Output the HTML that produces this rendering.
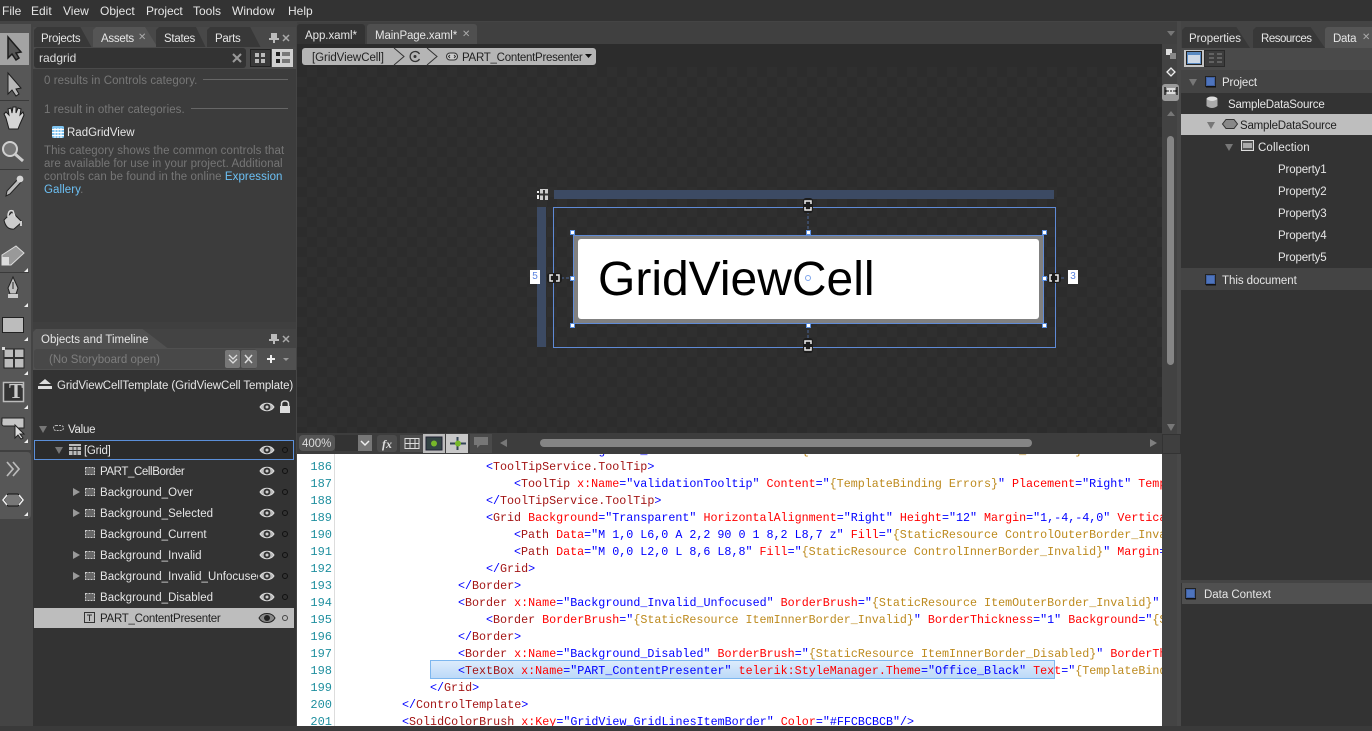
<!DOCTYPE html>
<html><head><meta charset="utf-8">
<style>
*{box-sizing:border-box}
html,body{margin:0;padding:0;width:1372px;height:726px;overflow:hidden;background:#3a3a3a}
.a{position:absolute}
.t{position:absolute;white-space:nowrap;font:11.5px/16px "Liberation Sans",sans-serif;color:#e6e6e6;letter-spacing:-.27px;transform:translateY(1px)}
.m{font-size:12px;letter-spacing:0;transform:none}
.g{color:#777;letter-spacing:.07px}
.b{letter-spacing:.03px}
.c{position:absolute;white-space:pre;font:11.7px/17px "Liberation Mono",monospace;color:#00f;height:17px;transform:translateY(2px)}
.n{position:absolute;left:297px;width:35px;text-align:right;font:12px/17px "Liberation Mono",monospace;color:#1f8f9f;transform:translateY(2px)}
.c b{font-weight:normal;color:#a31515}.c i{font-style:normal;color:#f00}.c u{text-decoration:none;color:#bd8a1e}
.tab{position:absolute;height:21px;background:#3a3a3a;clip-path:polygon(0 3px,3px 0,80% 0,100% 100%,0 100%)}
svg{position:absolute;overflow:visible}
.h{position:absolute;width:5px;height:5px;background:#fff;border:1px solid #5b8fe0}
.tri{position:absolute;width:0;height:0;border-left:4px solid transparent;border-right:4px solid transparent;border-top:7px solid #777}
.trr{position:absolute;width:0;height:0;border-top:4px solid transparent;border-bottom:4px solid transparent;border-left:7px solid #808080}
.ln{position:absolute;height:1px;background:#666}
</style></head>
<body>
<svg width="0" height="0" style="position:absolute">
<defs>
<symbol id="eye" viewBox="0 0 16 14"><path d="M1 7C4 2 12 2 15 7C12 12 4 12 1 7Z" fill="#bbb" stroke="#ddd"/><circle cx="8" cy="7" r="3.4" fill="#333"/><circle cx="8" cy="7" r="1.5" fill="#ccc"/></symbol>
<symbol id="bd" viewBox="0 0 12 12"><rect x="1.5" y="2.5" width="9" height="7" fill="#666" stroke="#ccc" stroke-dasharray="2 1"/></symbol>
<symbol id="blue" viewBox="0 0 12 12"><rect x=".5" y=".5" width="10" height="10" fill="#3f5f9f" stroke="#222"/><rect x="2" y="2" width="7" height="7" fill="#4e74bd"/><rect x="1" y="10" width="10" height="1.5" fill="#111"/></symbol>
</defs></svg>

<!-- menu -->
<div class="a" style="left:0;top:0;width:1372px;height:21px;background:#333"></div>
<div class="a" style="left:0;top:21px;width:1372px;height:705px;background:#444"></div>
<span class="t m" style="left:2px;top:3px">File</span><span class="t m" style="left:31px;top:3px">Edit</span><span class="t m" style="left:63px;top:3px">View</span><span class="t m" style="left:100px;top:3px">Object</span><span class="t m" style="left:146px;top:3px;letter-spacing:-.1px">Project</span><span class="t m" style="left:193px;top:3px">Tools</span><span class="t m" style="left:232px;top:3px">Window</span><span class="t m" style="left:288px;top:3px">Help</span>

<!-- left toolbar -->
<div class="a" style="left:0;top:24px;width:31px;height:426px;background:#575757"></div>
<div class="a" style="left:0;top:452px;width:31px;height:67px;background:#575757;border-radius:0 4px 4px 0"></div>
<div class="a" style="left:0;top:450px;width:31px;height:2px;background:#404040"></div>
<div class="a" style="left:0;top:33px;width:29px;height:32px;background:#a3a3a3"></div>
<div class="ln" style="left:0;top:100px;width:29px;background:#3a3a3a"></div>
<div class="ln" style="left:0;top:169px;width:29px;background:#3a3a3a"></div>
<div class="ln" style="left:0;top:272px;width:29px;background:#3a3a3a"></div>
<svg style="left:0;top:0" width="31" height="520">
<path d="M8 37V58L12 54L16 60L19 58L16 53L21 52Z" fill="#555" stroke="#1c1c1c" stroke-width="1.5"/>
<path d="M8 73V94L12 90L16 96L19 94L16 89L21 88Z" fill="#b8b8b8" stroke="#1c1c1c" stroke-width="1"/>
<path d="M6 118L4 114L6 112L9 115L8 109L11 108L12 113L13 107L16 107L16 113L18 108L21 109L20 115L23 112L24 115L20 124L18 129H9Z" fill="#d4d4d4" stroke="#1c1c1c"/>
<circle cx="10" cy="149" r="7" fill="#777" stroke="#d0d0d0" stroke-width="2"/><path d="M15 154L23 161" stroke="#ccc" stroke-width="3"/>
<path d="M19 178L22 181L10 194L6 196L7 191Z" fill="#bbb" stroke="#222"/><circle cx="20" cy="179" r="3.4" fill="#d4d4d4"/>
<path d="M4 220L12 212L22 222L14 229Q6 230 4 220Z" fill="#ccc" stroke="#222"/><path d="M8 217Q8 209 13 211L15 217" fill="none" stroke="#ddd" stroke-width="1.5"/><path d="M21 221V226" stroke="#ccc" stroke-width="2"/>
<path d="M2 255L16 246L24 253L11 265H2Z" fill="#999" stroke="#ddd"/><path d="M2 257H9V265H2Z" fill="#ddd"/>
<path d="M13 277L18 288L16 294H10L8 288Z" fill="#c0c0c0" stroke="#222"/><rect x="8" y="294" width="10" height="4" fill="#ccc"/><path d="M13 282V289" stroke="#222"/>
<rect x="2.500" y="317.500" width="21" height="15" fill="#bcbcbc" stroke="#222"/>
<rect x="4" y="349" width="20" height="19" fill="#bdbdbd" stroke="#222"/><path d="M14 349V368M4 358H24" stroke="#333" stroke-width="2"/><rect x="2" y="347" width="3" height="3" fill="#ddd"/>
<rect x="3.500" y="382.500" width="20" height="19" fill="#333" stroke="#bbb" stroke-width="1.5"/>
<path d="M2 418H24V428H17L14 426H4Q1 426 2 421Z" fill="#c6c6c6" stroke="#222"/><path d="M15 425V438L18 435L21 439L23 438L20 434H24Z" fill="#ddd" stroke="#222"/>
<path d="M7 462L13 469L7 476M13 462L19 469L13 476" fill="none" stroke="#bbb" stroke-width="1.7"/>
<path d="M8 494H18L22 500L18 506H8L4 500Z" fill="#777" stroke="#111"/><path d="M7 495L3 500L7 505M19 495L23 500L19 505" fill="none" stroke="#eee" stroke-width="1.5"/>
<g fill="#eee"><path d="M28 268V272H24ZM28 303V307H24ZM28 337V341H24ZM28 371V375H24ZM28 405V409H24ZM28 439V443H24ZM28 512V516H24Z"/></g>
</svg>
<span class="t" style="left:9px;top:379px;font:bold 21px/24px 'Liberation Serif',serif;color:#ccc;letter-spacing:0;transform:none">T</span>

<!-- Assets panel -->
<div class="a" style="left:33px;top:27px;width:263px;height:295px;background:#3c3c3c"></div>
<div class="a" style="left:33px;top:27px;width:263px;height:21px;background:#484848"></div>
<div class="tab" style="left:34px;top:27px;width:58px;background:#383838"></div>
<div class="tab" style="left:93px;top:27px;width:65px;background:#555"></div>
<div class="tab" style="left:156px;top:27px;width:50px;background:#383838"></div>
<div class="tab" style="left:207px;top:27px;width:54px;background:#383838"></div>
<span class="t" style="left:41px;top:30px">Projects</span><span class="t" style="left:101px;top:30px">Assets</span><span class="t" style="left:138px;top:29px;color:#aaa;font-size:10px">✕</span><span class="t" style="left:164px;top:30px">States</span><span class="t" style="left:215px;top:30px">Parts</span>
<svg style="left:268px;top:32px" width="28" height="12"><path d="M2 1H8V6H10V8H6V11H4V8H0V6H2Z" fill="#bbb" transform="translate(1,0)"/><path d="M15 3L21 9M21 3L15 9" stroke="#aaa" stroke-width="1.5"/></svg>
<div class="a" style="left:33px;top:47px;width:263px;height:22px;background:#4a4a4a"></div>
<div class="a" style="left:34px;top:48px;width:212px;height:20px;background:#333;border-radius:3px"></div>
<span class="t" style="left:39px;top:50px;color:#ddd;font-size:12px;letter-spacing:0;transform:none">radgrid</span>
<svg style="left:232px;top:53px" width="10" height="10"><path d="M1 1L9 9M9 1L1 9" stroke="#999" stroke-width="2"/></svg>
<div class="a" style="left:250px;top:49px;width:21px;height:18px;background:#3a3a3a;border:1px solid #222"></div>
<svg style="left:254px;top:52px" width="12" height="12"><path d="M1 1h4v4H1zM7 1h4v4H7zM1 7h4v4H1zM7 7h4v4H7z" fill="#bbb"/></svg>
<div class="a" style="left:272px;top:49px;width:21px;height:18px;background:#d0d0d0"></div>
<svg style="left:276px;top:52px" width="14" height="12"><path d="M0 0h4v4H0zM0 7h4v4H0z" fill="#222"/><path d="M6 1h8M6 3h8M6 8h8M6 10h8" stroke="#222"/></svg>
<span class="t g" style="left:44px;top:72px">0 results in Controls category.</span><div class="ln" style="left:203px;top:79px;width:85px"></div>
<span class="t g" style="left:44px;top:101px">1 result in other categories.</span><div class="ln" style="left:191px;top:108px;width:97px"></div>
<svg style="left:52px;top:126px" width="12" height="12"><rect width="12" height="12" rx="1.500" fill="#7ec3f0"/><path d="M0 3.500H12M0 6.500H12M0 9.500H12M3 2V12M6 2V12M9 2V12" stroke="#fff"/></svg>
<span class="t" style="left:67px;top:124px;letter-spacing:0">RadGridView</span>
<span class="t g" style="left:44px;top:144px;line-height:13px;color:#767676">This category shows the common controls that<br>are available for use in your project. Additional<br>controls can be found in the online <span style="color:#6cc0f4">Expression<br>Gallery</span>.</span>

<!-- Objects and Timeline -->
<div class="a" style="left:33px;top:322px;width:263px;height:7px;background:#3f3f3f"></div>
<div class="a" style="left:33px;top:329px;width:263px;height:20px;background:#434343"></div>
<div class="tab" style="left:33px;top:329px;width:137px;background:#505050"></div>
<span class="t" style="left:41px;top:331px;letter-spacing:0">Objects and Timeline</span>
<svg style="left:268px;top:333px" width="28" height="12"><path d="M2 1H8V6H10V8H6V11H4V8H0V6H2Z" fill="#bbb" transform="translate(1,0)"/><path d="M15 3L21 9M21 3L15 9" stroke="#aaa" stroke-width="1.5"/></svg>
<div class="a" style="left:33px;top:348px;width:263px;height:22px;background:#505050"></div>
<div class="a" style="left:34px;top:349px;width:223px;height:20px;background:#484848;border-radius:3px"></div>
<span class="t" style="left:49px;top:351px;color:#7e7e7e;letter-spacing:.02px">(No Storyboard open)</span>
<div class="a" style="left:225px;top:350px;width:15px;height:18px;background:#777;border-radius:2px"></div>
<div class="a" style="left:241px;top:350px;width:16px;height:18px;background:#666;border-radius:2px"></div>
<svg style="left:225px;top:350px" width="70" height="18"><path d="M4 5L8 9L12 5M4 9L8 13L12 9" fill="none" stroke="#ddd" stroke-width="1.300"/><path d="M20 5L27 13M27 5L20 13" stroke="#ddd" stroke-width="1.500"/><path d="M46 5V13M42 9H50" stroke="#eee" stroke-width="2"/><path d="M58 8H64L61 11Z" fill="#999"/></svg>
<div class="a" style="left:33px;top:370px;width:263px;height:356px;background:#333"></div>
<svg style="left:37px;top:378px" width="16" height="12"><path d="M8 1L14 6H2Z" fill="#ddd"/><path d="M1 8H15V11H1Z" fill="#ddd"/></svg>
<span class="t" style="left:57px;top:377px;letter-spacing:-.08px">GridViewCellTemplate (GridViewCell Template)</span>
<svg style="left:259px;top:400px" width="16" height="14"><use href="#eye" width="16" height="14"/></svg>
<svg style="left:278px;top:400px" width="14" height="14"><path d="M3.500 6V4Q3.500 1 7 1T10.500 4V6" fill="none" stroke="#ddd" stroke-width="1.500"/><rect x="2" y="6" width="10" height="7" fill="#ddd"/></svg>
<div class="tri" style="left:39px;top:426px"></div>
<svg style="left:53px;top:424px" width="12" height="8"><rect x=".5" y="1.500" width="10" height="5" rx="2.500" fill="none" stroke="#bbb" stroke-dasharray="2 1"/></svg>
<span class="t" style="left:68px;top:421px">Value</span>
<div class="a" style="left:34px;top:440px;width:260px;height:20px;background:#2b2b2b;border:1px solid #5b8fd9"></div>
<div class="tri" style="left:55px;top:447px"></div>
<svg style="left:69px;top:444px" width="12" height="12"><path d="M0 0H12V11H0Z" fill="#bbb"/><path d="M4 2V11M8 2V11M0 2.500H12M0 6.500H12" stroke="#333" stroke-width="1"/></svg>
<span class="t" style="left:84px;top:442px">[Grid]</span>

<div class="a" style="left:34px;top:608px;width:260px;height:20px;background:#bdbdbd"></div>
<span class="t" style="left:100px;top:463px;letter-spacing:-.4px">PART_CellBorder</span>
<span class="t b" style="left:100px;top:484px">Background_Over</span>
<span class="t b" style="left:100px;top:505px">Background_Selected</span>
<span class="t b" style="left:100px;top:526px">Background_Current</span>
<span class="t b" style="left:100px;top:547px">Background_Invalid</span>
<span class="t b" style="left:100px;top:568px;width:158px;overflow:hidden">Background_Invalid_Unfocused</span>
<span class="t b" style="left:100px;top:589px">Background_Disabled</span>
<span class="t" style="left:100px;top:610px;color:#222">PART_ContentPresenter</span>
<div class="trr" style="left:73px;top:488px;border-left-color:#999"></div><div class="trr" style="left:73px;top:509px;border-left-color:#999"></div><div class="trr" style="left:73px;top:551px;border-left-color:#999"></div><div class="trr" style="left:73px;top:572px;border-left-color:#999"></div>
<svg style="left:84px;top:0" width="12" height="726">
<use href="#bd" y="465" width="12" height="12"/><use href="#bd" y="486" width="12" height="12"/><use href="#bd" y="507" width="12" height="12"/><use href="#bd" y="528" width="12" height="12"/><use href="#bd" y="549" width="12" height="12"/><use href="#bd" y="570" width="12" height="12"/><use href="#bd" y="591" width="12" height="12"/>
<rect x=".5" y="612.500" width="10" height="10" fill="none" stroke="#333"/><path d="M3 615H8M5.500 615V621" stroke="#333"/>
</svg>
<svg style="left:259px;top:0" width="35" height="726">
<use href="#eye" y="443" width="16" height="14"/><use href="#eye" y="464" width="16" height="14"/><use href="#eye" y="485" width="16" height="14"/><use href="#eye" y="506" width="16" height="14"/><use href="#eye" y="527" width="16" height="14"/><use href="#eye" y="548" width="16" height="14"/><use href="#eye" y="569" width="16" height="14"/><use href="#eye" y="590" width="16" height="14"/>
<path d="M0 618C3 612 13 612 16 618C13 624 3 624 0 618Z" fill="#888" stroke="#222"/><circle cx="8" cy="618" r="3" fill="#222"/>
<g fill="none" stroke="#111"><circle cx="26" cy="450" r="2.500"/><circle cx="26" cy="471" r="2.500"/><circle cx="26" cy="492" r="2.500"/><circle cx="26" cy="513" r="2.500"/><circle cx="26" cy="534" r="2.500"/><circle cx="26" cy="555" r="2.500"/><circle cx="26" cy="576" r="2.500"/><circle cx="26" cy="597" r="2.500"/><circle cx="26" cy="618" r="2.500" stroke="#444"/></g>
</svg>

<!-- Center: tabs -->
<div class="a" style="left:297px;top:22px;width:884px;height:22px;background:#404040"></div>
<div class="a" style="left:297px;top:24px;width:68px;height:20px;background:#333;border-radius:3px 3px 0 0"></div>
<div class="a" style="left:367px;top:24px;width:110px;height:20px;background:#4f4f4f;border-radius:3px 3px 0 0"></div>
<span class="t" style="left:305px;top:27px;letter-spacing:-.05px">App.xaml*</span><span class="t" style="left:375px;top:27px;letter-spacing:-.12px">MainPage.xaml*</span><span class="t" style="left:462px;top:26px;color:#aaa;font-size:10px">✕</span>
<div class="a" style="left:297px;top:44px;width:865px;height:23px;background:#2c2c2c"></div>
<!-- breadcrumb -->
<div class="a" style="left:302px;top:48px;width:294px;height:17px;background:#b5b5b5;border-radius:3px"></div>
<svg style="left:394px;top:48px" width="50" height="17"><path d="M0 0L10 8.500L0 17M33 0L43 8.500L33 17" fill="none" stroke="#333"/></svg>
<span class="t" style="left:312px;top:49px;color:#222;letter-spacing:-.05px">[GridViewCell]</span>
<svg style="left:409px;top:51px" width="12" height="11"><path d="M10.500 3A5 5 0 1 0 10.500 8" fill="none" stroke="#333" stroke-width="1.300"/><circle cx="6" cy="5.500" r="1.500" fill="#333"/></svg>
<svg style="left:446px;top:52px" width="13" height="9"><rect x=".5" y="1" width="11" height="7" rx="3.500" fill="#ccc" stroke="#333"/><path d="M4 3L2.500 4.500L4 6M8 3L9.500 4.500L8 6" fill="none" stroke="#333"/></svg>
<span class="t" style="left:462px;top:49px;color:#222">PART_ContentPresenter</span>
<svg style="left:585px;top:54px" width="8" height="5"><path d="M0 0H7L3.500 4Z" fill="#111"/></svg>

<!-- artboard -->
<div class="a" style="left:297px;top:67px;width:865px;height:366px;background-image:conic-gradient(#2f2f2f 25%,#2c2c2c 0 50%,#2f2f2f 0 75%,#2c2c2c 0);background-size:20px 20px"></div>
<div class="a" style="left:554px;top:190px;width:500px;height:9px;background:#3c4a63"></div>
<div class="a" style="left:537px;top:207px;width:9px;height:140px;background:#3c4a63"></div>
<svg style="left:537px;top:189px" width="11" height="11"><rect x="3" y="0" width="8" height="11" fill="#ccc"/><path d="M7 1V11M3 5.500H11" stroke="#333" stroke-width="2"/><rect x="0" y="2" width="2" height="2" fill="#eee"/><rect x="0" y="6" width="2" height="4" fill="#eee"/></svg>
<div class="a" style="left:553px;top:207px;width:503px;height:141px;border:1px solid #5f8ad6"></div>
<div class="a" style="left:573px;top:235px;width:471px;height:89px;background:#808080;border:1px solid #5f8ad6"></div>
<div class="a" style="left:578px;top:239px;width:461px;height:80px;background:#fff;border-radius:3px"></div>
<span class="t" style="left:598px;top:251px;font:48px/56px 'Liberation Sans',sans-serif;color:#000;letter-spacing:0">GridViewCell</span>
<svg style="left:530px;top:195px" width="560" height="160">
<g stroke="#3c4a63" stroke-width="2" stroke-dasharray="3 2"><path d="M278 16V36M278 130V146M26 83H42M516 83H534"/></g>
<g fill="#1c1c1c"><rect x="273" y="3" width="10" height="15" rx="3"/><rect x="273" y="143" width="10" height="15" rx="3"/><rect x="17" y="78" width="15" height="10" rx="3"/><rect x="518" y="78" width="13" height="10" rx="3"/></g>
<g fill="none" stroke="#eee" stroke-width="1.500"><path d="M275 9V6H281V9M275 12V15H281V12M275 149V146H281V149M275 152V155H281V152M23 80H20V86H23M26 80H29V86H26M522 80H520V86H522M525 80H528V86H525"/></g>
<circle cx="278" cy="83" r="2.500" fill="none" stroke="#7da5ec"/>
</svg>
<div class="h" style="left:570px;top:230px"></div><div class="h" style="left:806px;top:230px"></div><div class="h" style="left:1042px;top:230px"></div><div class="h" style="left:570px;top:276px"></div><div class="h" style="left:1042px;top:276px"></div><div class="h" style="left:570px;top:323px"></div><div class="h" style="left:806px;top:323px"></div><div class="h" style="left:1042px;top:323px"></div>
<div class="a" style="left:530px;top:270px;width:10px;height:14px;background:#fff;color:#5b83e0;font:10px/14px 'Liberation Sans';text-align:center">5</div>
<div class="a" style="left:1068px;top:270px;width:10px;height:14px;background:#fff;color:#5b83e0;font:10px/14px 'Liberation Sans';text-align:center">3</div>

<!-- right scroll strip -->
<div class="a" style="left:1162px;top:44px;width:19px;height:390px;background:#424242"></div>
<div class="a" style="left:1177px;top:21px;width:4px;height:705px;background:#484848"></div>
<div class="a" style="left:1162px;top:84px;width:17px;height:17px;background:#9a9a9a;border-radius:3px"></div>
<svg style="left:1162px;top:28px" width="18" height="90">
<path d="M5 3H13L9 8Z" fill="#777"/>
<rect x="4" y="21" width="6" height="6" fill="#ddd"/><rect x="8" y="25" width="6" height="6" fill="#888"/>
<path d="M5 44L9 40L13 44L9 48Z" fill="#555" stroke="#eee" stroke-width="1.300"/>
<path d="M3 59V67M15 59V67M3 63H15" stroke="#111" stroke-width="1.300"/><rect x="5" y="60" width="8" height="6" fill="#ddd"/><path d="M5 63H13" stroke="#111" stroke-dasharray="2 1"/>
<path d="M5 88L9 83L13 88Z" fill="#777"/>
</svg>
<div class="a" style="left:1167px;top:136px;width:7px;height:229px;background:#858585;border-radius:4px"></div>
<div class="a" style="left:1167px;top:424px;width:0;height:0;border-left:4px solid transparent;border-right:4px solid transparent;border-top:7px solid #777"></div>

<!-- zoom toolbar -->
<div class="a" style="left:297px;top:433px;width:865px;height:21px;background:#3d3d3d"></div>
<div class="a" style="left:1162px;top:434px;width:19px;height:20px;background:#3f3f3f;border:1px solid #333"></div>
<div class="a" style="left:299px;top:435px;width:36px;height:16px;background:#565656;border-radius:4px"></div>
<div class="a" style="left:335px;top:435px;width:24px;height:16px;background:#333"></div>
<span class="t" style="left:302px;top:435px;color:#ddd;letter-spacing:0">400%</span>
<div class="a" style="left:358px;top:435px;width:14px;height:16px;background:#777"></div>
<svg style="left:361px;top:441px" width="8" height="5"><path d="M0 0L4 4L8 0" fill="none" stroke="#eee" stroke-width="1.500"/></svg>
<div class="a" style="left:377px;top:435px;width:20px;height:17px;background:#4c4c4c;border-radius:3px"></div>
<span class="t" style="left:382px;top:436px;font:italic bold 12px/15px 'Liberation Serif',serif;color:#ddd;letter-spacing:0">fx</span>
<div class="a" style="left:400px;top:435px;width:23px;height:17px;background:#4c4c4c"></div>
<svg style="left:402px;top:437px" width="20" height="13"><path d="M3 1.500H17V11.500H3ZM3 6.500H17M8 1.500V11.500M13 1.500V11.500" fill="none" stroke="#ddd"/></svg>
<div class="a" style="left:423px;top:434px;width:22px;height:19px;background:#bcbcbc"></div>
<svg style="left:425px;top:436px" width="18" height="15"><rect x="1" y="1" width="16" height="13" fill="#344" stroke="#223"/><circle cx="9" cy="7.500" r="3" fill="#76b82a"/></svg>
<div class="a" style="left:446px;top:434px;width:22px;height:19px;background:#c8c8c8"></div>
<svg style="left:449px;top:436px" width="18" height="15"><path d="M1 7.500H17M8.500 1V14" stroke="#345" stroke-width="2"/><circle cx="9" cy="7.500" r="3" fill="#76b82a"/></svg>
<div class="a" style="left:470px;top:434px;width:22px;height:19px;background:#4a4a4a"></div>
<svg style="left:474px;top:437px" width="14" height="12"><path d="M0 0H14V8H6L3 11V8H0Z" fill="#777"/></svg>
<div class="a" style="left:500px;top:439px;width:0;height:0;border-top:4px solid transparent;border-bottom:4px solid transparent;border-right:7px solid #777"></div>
<div class="a" style="left:540px;top:439px;width:492px;height:8px;background:#858585;border-radius:4px"></div>
<div class="trr" style="left:1150px;top:439px"></div>

<!-- code -->
<div class="a" style="left:297px;top:454px;width:865px;height:272px;background:#fff;overflow:hidden"></div>
<div class="a" style="left:297px;top:454px;width:38px;height:272px;background:#fff;border-right:1px solid #ddd"></div>
<div class="a" style="left:430px;top:660px;width:625px;height:19px;background:linear-gradient(#dcecfc,#bcd9f8);border:1px solid #7db7ef"></div>
<div class="a" style="left:335px;top:454px;width:827px;height:272px;overflow:hidden" id="cw">
<div class="c" style="left:123px;top:-13px">&lt;<b>Border</b> <i>x:Name</i>="Background_Invalid" <i>BorderBrush</i>="<u>{StaticResource ItemOuterBorder_Invalid}</u>" <i>BorderThickness</i>="1"</div>
<div class="c" style="left:151px;top:3px">&lt;<b>ToolTipService.ToolTip</b>&gt;</div>
<div class="c" style="left:179px;top:20px">&lt;<b>ToolTip</b> <i>x:Name</i>="validationTooltip" <i>Content</i>="<u>{TemplateBinding Errors}</u>" <i>Placement</i>="Right" <i>Temp</i></div>
<div class="c" style="left:151px;top:37px">&lt;/<b>ToolTipService.ToolTip</b>&gt;</div>
<div class="c" style="left:151px;top:54px">&lt;<b>Grid</b> <i>Background</i>="Transparent" <i>HorizontalAlignment</i>="Right" <i>Height</i>="12" <i>Margin</i>="1,-4,-4,0" <i>Vertica</i></div>
<div class="c" style="left:179px;top:71px">&lt;<b>Path</b> <i>Data</i>="M 1,0 L6,0 A 2,2 90 0 1 8,2 L8,7 z" <i>Fill</i>="<u>{StaticResource ControlOuterBorder_Inva</u></div>
<div class="c" style="left:179px;top:88px">&lt;<b>Path</b> <i>Data</i>="M 0,0 L2,0 L 8,6 L8,8" <i>Fill</i>="<u>{StaticResource ControlInnerBorder_Invalid}</u>" <i>Margin</i>=</div>
<div class="c" style="left:151px;top:105px">&lt;/<b>Grid</b>&gt;</div>
<div class="c" style="left:123px;top:122px">&lt;/<b>Border</b>&gt;</div>
<div class="c" style="left:123px;top:139px">&lt;<b>Border</b> <i>x:Name</i>="Background_Invalid_Unfocused" <i>BorderBrush</i>="<u>{StaticResource ItemOuterBorder_Invalid}</u>"</div>
<div class="c" style="left:151px;top:156px">&lt;<b>Border</b> <i>BorderBrush</i>="<u>{StaticResource ItemInnerBorder_Invalid}</u>" <i>BorderThickness</i>="1" <i>Background</i>="<u>{S</u></div>
<div class="c" style="left:123px;top:173px">&lt;/<b>Border</b>&gt;</div>
<div class="c" style="left:123px;top:190px">&lt;<b>Border</b> <i>x:Name</i>="Background_Disabled" <i>BorderBrush</i>="<u>{StaticResource ItemInnerBorder_Disabled}</u>" <i>BorderTh</i></div>
<div class="c" style="left:123px;top:207px">&lt;<b>TextBox</b> <i>x:Name</i>="PART_ContentPresenter" <i>telerik:StyleManager.Theme</i>="Office_Black" <i>Text</i>="<u>{TemplateBind</u></div>
<div class="c" style="left:95px;top:224px">&lt;/<b>Grid</b>&gt;</div>
<div class="c" style="left:67px;top:241px">&lt;/<b>ControlTemplate</b>&gt;</div>
<div class="c" style="left:67px;top:258px">&lt;<b>SolidColorBrush</b> <i>x:Key</i>="GridView_GridLinesItemBorder" <i>Color</i>="#FFCBCBCB"/&gt;</div>
</div>
<div class="n" style="top:457px">186</div><div class="n" style="top:474px">187</div><div class="n" style="top:491px">188</div><div class="n" style="top:508px">189</div><div class="n" style="top:525px">190</div><div class="n" style="top:542px">191</div><div class="n" style="top:559px">192</div><div class="n" style="top:576px">193</div><div class="n" style="top:593px">194</div><div class="n" style="top:610px">195</div><div class="n" style="top:627px">196</div><div class="n" style="top:644px">197</div><div class="n" style="top:661px">198</div><div class="n" style="top:678px">199</div><div class="n" style="top:695px">200</div><div class="n" style="top:712px">201</div>

<!-- Right panel -->
<div class="a" style="left:1181px;top:27px;width:191px;height:21px;background:#444"></div>
<div class="tab" style="left:1182px;top:27px;width:68px;background:#383838"></div>
<div class="tab" style="left:1253px;top:27px;width:72px;background:#383838"></div>
<div class="a" style="left:1325px;top:27px;width:47px;height:21px;background:#555;border-radius:3px 0 0 0"></div>
<span class="t" style="left:1189px;top:30px;letter-spacing:-.05px">Properties</span><span class="t" style="left:1261px;top:30px;letter-spacing:-.49px">Resources</span><span class="t" style="left:1333px;top:30px">Data</span><span class="t" style="left:1362px;top:29px;color:#aaa;font-size:10px">✕</span>
<div class="a" style="left:1181px;top:48px;width:191px;height:22px;background:#4a4a4a"></div>
<div class="a" style="left:1184px;top:50px;width:20px;height:17px;background:#c4c4c4"></div>
<div class="a" style="left:1204px;top:50px;width:21px;height:17px;background:#3c3c3c;border:1px solid #2a2a2a"></div>
<svg style="left:1186px;top:51px" width="38" height="15"><rect x=".5" y=".5" width="15" height="13" fill="#5a8ac2" stroke="#222"/><rect x="2" y="4" width="12" height="8" fill="#cfd9e6"/><path d="M23 3H28M31 3H36M23 7H28M31 7H36M23 11H28M31 11H36" stroke="#888"/></svg>
<div class="a" style="left:1181px;top:70px;width:191px;height:510px;background:#333"></div>
<div class="a" style="left:1181px;top:70px;width:191px;height:23px;background:#444"></div>
<div class="a" style="left:1181px;top:114px;width:191px;height:21px;background:#bebebe"></div>
<div class="a" style="left:1181px;top:268px;width:191px;height:22px;background:#444"></div>
<div class="tri" style="left:1189px;top:79px"></div><div class="tri" style="left:1207px;top:122px"></div><div class="tri" style="left:1225px;top:144px"></div>
<svg style="left:1205px;top:76px" width="12" height="12"><use href="#blue" width="12" height="12"/></svg>
<svg style="left:1205px;top:274px" width="12" height="12"><use href="#blue" width="12" height="12"/></svg>
<svg style="left:1206px;top:96px" width="12" height="14"><ellipse cx="6" cy="3" rx="5.500" ry="2.500" fill="#ddd"/><path d="M.5 3V10Q6 14 11.500 10V3Q6 7 .5 3Z" fill="#aaa"/></svg>
<svg style="left:1222px;top:119px" width="16" height="10"><path d="M4 .5H12L15.500 5L12 9.500H4L.5 5Z" fill="#888" stroke="#333"/></svg>
<svg style="left:1241px;top:140px" width="13" height="11"><rect x=".5" y=".5" width="12" height="10" fill="#555" stroke="#ddd"/><rect x="2" y="3" width="9" height="5" fill="#aaa"/></svg>
<span class="t" style="left:1222px;top:74px;letter-spacing:-.13px">Project</span>
<span class="t" style="left:1228px;top:96px;letter-spacing:-.2px">SampleDataSource</span>
<span class="t" style="left:1240px;top:117px;color:#222;letter-spacing:-.2px">SampleDataSource</span>
<span class="t" style="left:1258px;top:139px;letter-spacing:.13px">Collection</span>
<span class="t" style="left:1278px;top:161px;letter-spacing:-.15px">Property1</span>
<span class="t" style="left:1278px;top:183px;letter-spacing:-.15px">Property2</span>
<span class="t" style="left:1278px;top:205px;letter-spacing:-.15px">Property3</span>
<span class="t" style="left:1278px;top:227px;letter-spacing:-.15px">Property4</span>
<span class="t" style="left:1278px;top:249px;letter-spacing:-.15px">Property5</span>
<span class="t" style="left:1222px;top:272px;letter-spacing:-.05px">This document</span>
<div class="a" style="left:1181px;top:580px;width:191px;height:146px;background:#333"></div>
<div class="a" style="left:1181px;top:580px;width:191px;height:3px;background:#444"></div>
<div class="a" style="left:1182px;top:583px;width:190px;height:21px;background:#505050"></div>
<svg style="left:1185px;top:588px" width="12" height="12"><use href="#blue" width="12" height="12"/></svg>
<span class="t" style="left:1204px;top:586px;letter-spacing:-.02px">Data Context</span>
</body></html>
